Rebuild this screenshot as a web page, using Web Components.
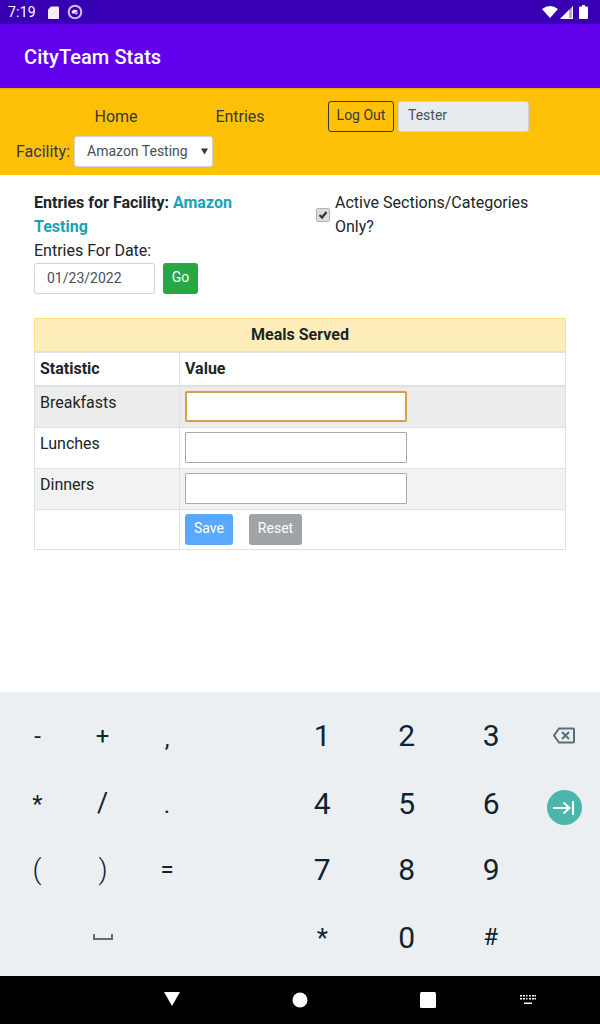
<!DOCTYPE html>
<html><head><meta charset="utf-8"><title>CityTeam Stats</title>
<style>
html,body{margin:0;padding:0;background:#fff}
body{width:600px;height:1024px;overflow:hidden;font-family:Roboto,sans-serif;display:flex;flex-direction:column}
</style></head><body>
<status-bar></status-bar>
<app-bar>CityTeam Stats</app-bar>
<nav-panel></nav-panel>
<entries-page></entries-page>
<num-keyboard></num-keyboard>
<system-nav></system-nav>
<script>
function def(name, html){
  customElements.define(name, class extends HTMLElement{
    constructor(){super();this.attachShadow({mode:'open'}).innerHTML=html;}
  });
}
def('status-bar',`<style>
:host{display:flex;align-items:center;height:24px;background:#3700b3;color:#fff;flex:none;padding:0 8px;box-sizing:border-box;font:14px/24px Roboto,sans-serif}
.t{letter-spacing:.2px;margin-right:12px}
svg{display:block}
.sp{flex:1}
</style>
<span class="t">7:19</span>
<svg width="11" height="13" viewBox="0 0 11 13" style="margin-right:8px"><path d="M3 .5H10a1 1 0 0 1 1 1V12a1 1 0 0 1-1 1H1a1 1 0 0 1-1-1V3.500z" fill="#f3eefc"/></svg>
<svg width="16" height="16" viewBox="0 0 16 16"><circle cx="8" cy="8" r="6.300" fill="none" stroke="#cdbcf3" stroke-width="2"/><path d="M4.500 7.500C6 5.500 9 5 11 7L10 10.500 5.500 9.500z" fill="#f1ebfd"/><path d="M7 10 11 7" stroke="#6a45c4" stroke-width="1"/></svg>
<span class="sp"></span>
<svg width="16" height="12" viewBox="0 0 16 12" style="margin-right:2px"><path d="M0 3Q8-3 16 3L8 12z" fill="#fff"/></svg>
<svg width="14" height="13" viewBox="0 0 14 13" style="margin-right:5px"><path d="M0 13 13 0v13z" fill="#b9a4e6"/><path d="M0 13 9 4v8h3V1.500L13 0v13z" fill="#fff"/></svg>
<svg width="9" height="14" viewBox="0 0 9 14" style="margin-right:4px"><path d="M3 0h3v1.500h2a1 1 0 0 1 1 1V13a1 1 0 0 1-1 1H1a1 1 0 0 1-1-1V2.500a1 1 0 0 1 1-1h2z" fill="#fff"/></svg>`);
def('app-bar',`<style>
:host{display:flex;align-items:center;height:64px;flex:none;background:#6200ee;color:#fff;padding:2px 24px 0;box-sizing:border-box;font:500 20px Roboto,sans-serif;letter-spacing:.07px}
</style><slot></slot>`);
def('nav-panel',`<style>
:host{display:block;height:87px;flex:none;background:#ffc107;color:#343a40;box-sizing:border-box;padding-top:13px;font:16px/24px Roboto,sans-serif;box-shadow:inset 0 3px 2px -2px rgba(160,100,0,.25)}
.r1{display:flex;height:31px;align-items:center}
.l{width:78px;text-align:center}
.out{box-sizing:border-box;width:66px;height:31px;border:1px solid #343a40;border-radius:3px;font-size:14px;line-height:27px;text-align:center;margin-left:49px;color:#343a40}
.user{box-sizing:border-box;width:131px;height:31px;margin-left:4px;background:#e9ecef;border:1px solid #ced4da;border-radius:3px;font-size:14px;line-height:27px;padding-left:9px;color:#495057}
.r2{display:flex;align-items:center;height:31px;margin-top:4px;padding-left:16px}
.sel{box-sizing:border-box;position:relative;width:139px;height:31px;margin-left:4px;background:#fff;border:1px solid #ced4da;border-radius:3px;font-size:14px;line-height:28px;padding-left:12px;color:#495057}
.sel svg{position:absolute;right:4px;top:11px}
</style>
<div class="r1"><span class="l" style="margin-left:77px">Home</span><span class="l" style="margin-left:46px">Entries</span><span class="out">Log Out</span><span class="user">Tester</span></div>
<div class="r2"><span>Facility:</span><span class="sel">Amazon Testing<svg width="7" height="7" viewBox="0 0 7 7"><path d="M0 .5h7L3.500 6.500z" fill="#343a40"/></svg></span></div>`);
def('stat-row',`<style>
:host{display:grid;grid-template-columns:145px 1fr;box-sizing:border-box;border-left:1px solid #dee2e6;border-right:1px solid #dee2e6;border-bottom:1px solid #dee2e6;height:var(--h,41px);background:var(--bg,#fff);font:16px/24px Roboto,sans-serif;color:#212529}
.a{padding:4px 5px;border-right:1px solid #dee2e6}
.b{padding:4px 5px 0}
</style><div class="a"><slot name="k"></slot></div><div class="b"><slot></slot></div>`);
def('text-box',`<style>
:host{display:block;box-sizing:border-box;width:222px;height:31px;background:#fff;border:1px solid #a9a9a9;border-radius:1px}
:host([focused]){border:2px solid #d4a24c;border-radius:2px;box-shadow:0 0 1px #e8cf9f}
</style>`);
def('entries-page',`<style>
:host{display:block;flex:1;min-height:0;background:#fff;padding:16px 34px 0;box-sizing:border-box;font:16px/24px Roboto,sans-serif;color:#212529}
.top{display:flex;height:127px}
.left{width:282px}
.left .h{width:240px;font-weight:700}
.acc{color:#17a2b8}
.date{display:flex;align-items:center}
.di{box-sizing:border-box;width:121px;height:31px;border:1px solid #ced4da;border-radius:3px;font-size:14px;line-height:29px;padding-left:12px;color:#495057}
.go{box-sizing:border-box;width:35px;height:31px;margin-left:8px;background:#28a745;color:#fff;border-radius:3px;font-size:14px;line-height:28px;text-align:center}
.chk{display:flex;flex:1}
.cb{box-sizing:border-box;flex:none;width:14px;height:14px;margin:17px 5px 0 0;background:#dcdcdc;border:1px solid #b4b4b4;border-radius:2px;display:block}
.cb svg{display:block}
.cap{box-sizing:border-box;height:35px;background:#ffeeba;border:1px solid #ffdf7e;border-bottom:2px solid #dee2e6;text-align:center;font-weight:700;line-height:32px}
.btn{display:inline-block;box-sizing:border-box;height:31px;border-radius:3px;color:#fff;font-size:14px;line-height:28px;text-align:center}
</style>
<div class="top">
  <div class="left">
    <div class="h">Entries for Facility: <span class="acc">Amazon</span> <span class="acc">Testing</span></div>
    <div>Entries For Date:</div>
    <div class="date"><span class="di">01/23/2022</span><span class="go">Go</span></div>
  </div>
  <div class="chk"><span class="cb"><svg width="12" height="12" viewBox="0 0 12 12"><path d="M2.500 6 5 8.500 9.500 3" fill="none" stroke="#333" stroke-width="2.200"/></svg></span><span>Active Sections/Categories Only?</span></div>
</div>
<div class="cap">Meals Served</div>
<stat-row style="--h:34px;border-bottom-width:2px"><b slot="k">Statistic</b><b>Value</b></stat-row>
<stat-row style="--bg:#ececec"><span slot="k">Breakfasts</span><text-box focused></text-box></stat-row>
<stat-row><span slot="k">Lunches</span><text-box></text-box></stat-row>
<stat-row style="--bg:#f2f2f2"><span slot="k">Dinners</span><text-box></text-box></stat-row>
<stat-row style="--h:40px"><span class="btn" style="width:48px;background:#5aa9ff">Save</span><span class="btn" style="width:53px;margin-left:16px;background:#a0a4a9">Reset</span></stat-row>`);
def('num-keyboard',`<style>
:host{display:grid;flex:none;height:284px;box-sizing:border-box;background:#ebeff2;border-top:1px solid #f0f0f0;padding:9px 0 0 5px;color:#102430;font-family:Roboto,sans-serif;
grid-template-columns:65px 65px 65px 80px 84.5px 84.5px 84.5px 61px;grid-template-rows:67px 67px 67px 67px;align-items:center;justify-items:center}
span{display:block;line-height:1}
.s{font-size:24px}
.n{font-size:30px}
.d{margin-top:2px}
svg{display:block}
</style>
<span class="s">-</span><span class="s">+</span><span class="s" style="padding-top:6px;margin-right:1px">,</span><i></i><span class="n">1</span><span class="n">2</span><span class="n">3</span>
<svg width="22" height="17" viewBox="0 0 22 17"><path d="M6 1.500H20a1 1 0 0 1 1 1v12a1 1 0 0 1-1 1H6L1 8.500z" fill="none" stroke="#5c6d76" stroke-width="2"/><path d="M9 5l7 7M16 5l-7 7" stroke="#5c6d76" stroke-width="2"/></svg>
<span class="s d">*</span><span class="s d" style="font-size:27px">/</span><span class="s" style="padding-top:4px;margin-right:1px">.</span><i></i><span class="n d">4</span><span class="n d">5</span><span class="n d">6</span>
<span style="width:35px;height:35px;border-radius:50%;background:#4db6ac;display:flex;align-items:center;justify-content:center;margin-top:10px"><svg width="22" height="14" viewBox="0 0 22 14"><path d="M0 7h16M10.500 1.500 16.500 7l-6 5.500M20 0v14" fill="none" stroke="#fff" stroke-width="2"/></svg></span>
<span class="s" style="font-size:28px;font-weight:300;margin-right:1px">(</span><span class="s" style="font-size:28px;font-weight:300;margin-left:1px">)</span><span class="s" style="margin-right:1px">=</span><i></i><span class="n">7</span><span class="n">8</span><span class="n">9</span><i></i>
<i></i><svg width="20" height="6" viewBox="0 0 20 6" style="margin-top:1px"><path d="M1 0v5h18V0" fill="none" stroke="#5c6d76" stroke-width="2"/></svg><i></i><i></i><span class="s d" style="font-size:26px">*</span><span class="n d">0</span><span class="s" style="font-size:24px;margin-right:1px">#</span><i></i>`);
def('system-nav',`<style>
:host{display:block;position:relative;height:48px;flex:none;background:#000}
svg{position:absolute;display:block}
</style>
<svg style="left:164px;top:16px" width="16" height="14" viewBox="0 0 16 14"><path d="M0 0h16L8 14z" fill="#fff"/></svg>
<svg style="left:292px;top:16px" width="16" height="16" viewBox="0 0 16 16"><circle cx="8" cy="8" r="7.500" fill="#fff"/></svg>
<svg style="left:420px;top:16px" width="16" height="16" viewBox="0 0 16 16"><rect width="16" height="16" rx="1.500" fill="#fff"/></svg>
<svg style="left:520px;top:19px" width="16" height="10" viewBox="0 0 16 10" fill="#fff"><path d="M0 0h2v1.500H0zM3 0h2v1.500H3zM6 0h1.500v1.500H6zM9 0h2v1.500H9zM12 0h2v1.500h-2zM14.500 0H16v1.500h-1.500zM0 3h2v1.500H0zM3 3h2v1.500H3zM6 3h1.500v1.500H6zM9 3h2v1.500H9zM12 3h2v1.500h-2zM14.500 3H16v1.500h-1.500zM4 7.500h8V9H4z"/></svg>`);
</script>
</body></html>
